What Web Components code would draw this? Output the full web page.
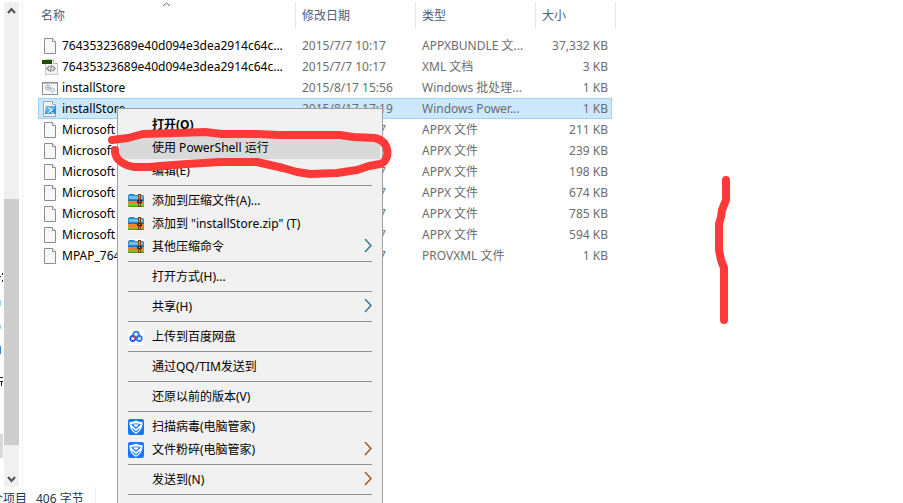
<!DOCTYPE html>
<html lang="zh-CN">
<head>
<meta charset="utf-8">
<meta name="viewport" content="width=device-width, initial-scale=1">
<title>installStore</title>
<style>
  body {
    margin: 0;
    background: #fff;
    font: 12px/20px "Noto Sans", "Noto Sans CJK SC", sans-serif;
    color: #000;
    --text-muted: #6d6d6d;
    --text-header: #4c607a;
    --line: #e5e5e5;
  }
</style>
</head>
<body>
<explorer-window>
  <nav-edge slot="nav"></nav-edge>
  <scroll-bar slot="scroll"></scroll-bar>
  <file-list></file-list>
  <status-bar slot="status">
    <span>个项目</span>
    <span slot="size">406 字节</span>
  </status-bar>
  <context-menu slot="overlay">
    <menu-item strong>打开(O)</menu-item>
    <menu-item active>使用 PowerShell 运行</menu-item>
    <menu-item>编辑(E)</menu-item>
    <menu-line></menu-line>
    <menu-item icon="archive">添加到压缩文件(A)...</menu-item>
    <menu-item icon="archive">添加到 "installStore.zip" (T)</menu-item>
    <menu-item icon="archive" submenu="#2b6a8c">其他压缩命令</menu-item>
    <menu-line></menu-line>
    <menu-item>打开方式(H)...</menu-item>
    <menu-line></menu-line>
    <menu-item submenu="#2b6a8c">共享(H)</menu-item>
    <menu-line></menu-line>
    <menu-item icon="cloud">上传到百度网盘</menu-item>
    <menu-line></menu-line>
    <menu-item>通过QQ/TIM发送到</menu-item>
    <menu-line></menu-line>
    <menu-item>还原以前的版本(V)</menu-item>
    <menu-line></menu-line>
    <menu-item icon="shield">扫描病毒(电脑管家)</menu-item>
    <menu-item icon="shield" submenu="#9a4a10">文件粉碎(电脑管家)</menu-item>
    <menu-line></menu-line>
    <menu-item submenu="#9a4a10">发送到(N)</menu-item>
    <menu-line></menu-line>
  </context-menu>
  <pen-marks slot="overlay"></pen-marks>
</explorer-window>

<script>
const ICONS = {
  file: `
    <path d="M2.500.5h8l3 3v12h-11z" fill="#f8f8f8" stroke="#8c8c8c"/>
    <path d="M10.500.5v3h3" fill="#fff" stroke="#8c8c8c"/>`,
  xml: `
    <path d="M3.500.5h8l4 4v11h-12z" fill="#f4f4f4" stroke="#c8c8c8"/>
    <path d="M11.500.5v4h4" fill="#fff" stroke="#b8b8b8"/>
    <path d="M0 1h10v4H0z" fill="#1f4d00"/>
    <path d="M7.500 7 5 9.500 7.500 12M10.500 7 13 9.500 10.500 12M9.500 6l-1 7" fill="none" stroke="#8f8f8f" stroke-width="1.400"/>`,
  batch: `
    <rect x=".5" y="2.500" width="15" height="12" fill="#f7f8f9" stroke="#8c9094"/>
    <path d="M1 3h14" stroke="#8c9094"/>
    <circle cx="6" cy="7.500" r="2.500" fill="#e4e6e8" stroke="#8d9398" stroke-dasharray="1.500 .6"/>
    <circle cx="6" cy="7.500" r=".8" fill="#7c8288"/>
    <circle cx="10.500" cy="10" r="2" fill="#dcecf4" stroke="#7fa6b9" stroke-dasharray="1.300 .5"/>`,
  script: `
    <path d="M1.500.5h9l3 3v12h-12z" fill="#f2f3f4" stroke="#a4a7aa"/>
    <path d="M10.500.5v3h3" fill="#fff" stroke="#a4a7aa"/>
    <path d="M4 5h10v7l-1 1H3z" fill="#2490cc"/>
    <path d="M4 5h9v3l-9 3z" fill="#5fb6e2"/>
    <path d="m6.500 6.500 3.500 2.800-4.500 2.700M9 12h3" fill="none" stroke="#eaf6fc" stroke-width="1.200"/>`,
  archive: `
    <path d="M0 0h16v15H0z" fill="#fff"/>
    <path d="M0 3 1 1h5l1 1h8l1 1v6H0z" fill="#2589cf"/>
    <path d="M1 3h14v3H1z" fill="#6fbdf0"/>
    <path d="M0 8h16v3H0z" fill="#f5811f"/>
    <path d="M0 7h16v1H0z" fill="#1b6fb3"/>
    <path d="M0 11h16v3H0z" fill="#7cc02e"/>
    <path d="M0 13h16v1H0z" fill="#4f961d"/>
    <path d="M10 1h3v13h-3z" fill="#7a3d19"/>
    <path d="M9 7h5v3H9z" fill="#4d2a18"/>
    <path d="M11 2h1v4h-1zM11 8h1v1h-1zM11 11h1v2h-1z" fill="#d3a366"/>`,
  cloud: `
    <rect width="16" height="16" rx="3" fill="#fff"/>
    <g fill="none" stroke-width="1.800">
      <circle cx="8" cy="5.500" r="2.800" stroke="#2878f5"/>
      <circle cx="4.800" cy="9.500" r="2.500" stroke="#2858e8"/>
      <circle cx="11.200" cy="9.500" r="2.500" stroke="#2878f5"/>
    </g>
    <path d="m6 9 1.800-1.800" stroke="#f04040" stroke-width="2"/>`,
  shield: `
    <rect width="16" height="16" rx="2" fill="#1677ff"/>
    <path d="M8 1.500c2 1 4 1.500 6.500 1.500.2 5-1.500 9-6.500 12C3 12 1.300 8 1.500 3 4 3 6 2.500 8 1.500z" fill="#fff"/>
    <path d="M3 5.500C5 4 11 4 13 5.500L8 10z" fill="#1677ff"/>
    <path d="M5 5.800c2-.8 4-.8 6 0L8 8.300z" fill="#fff"/>
    <path d="M3.800 8.500 8 12.200l4.200-3.700C11.400 11 10 12.300 8 13.600 6 12.300 4.600 11 3.800 8.500z" fill="#1677ff"/>`,
};

class ExplorerWindow extends HTMLElement {
  constructor() {
    super();
    this.attachShadow({ mode: "open" });
    this.shadowRoot.innerHTML = `
      <style>
        :host {
          display: grid;
          position: relative;
          grid-template-columns: 4px 15px 1fr;
          grid-template-rows: 1fr 16px;
          height: 100vh;
          overflow: hidden;
        }
        main {
          margin: 2px 0 0 3px;
          border-left: 1px solid #f0f0f0;
          min-width: 0;
        }
        footer {
          grid-column: 1 / -1;
        }
      </style>
      <slot name="nav"></slot>
      <slot name="scroll"></slot>
      <main><slot></slot></main>
      <footer><slot name="status"></slot></footer>
      <slot name="overlay"></slot>
    `;
  }
}

// the sliver of the folder tree left of its scrollbar
class NavEdge extends HTMLElement {
  constructor() {
    super();
    this.attachShadow({ mode: "open" });
    this.shadowRoot.innerHTML = `
      <style>
        :host { display: block; overflow: hidden; }
        svg { display: block; }
      </style>
      <svg width="4" height="487" aria-hidden="true">
        <path d="M2 273h1v2H2zM2 280h1v2H2zM0 276h1v1H0z" fill="#222"/>
        <path d="M0 300h1v6H0zM0 325h1v4H0z" fill="#8ed8f5"/>
        <path d="M0 346h1v8H0z" fill="#2f83d8"/>
        <path d="M0 377h3v1H0zM0 381h3v1H0zM1 382h1v4H1z" fill="#222"/>
        <path d="M0 434h3v24H0z" fill="#d9d9d9"/>
      </svg>
    `;
  }
}

class ScrollBar extends HTMLElement {
  constructor() {
    super();
    this.attachShadow({ mode: "open" });
    this.shadowRoot.innerHTML = `
      <style>
        :host {
          display: grid;
          grid-template-rows: 17px 180fr 246fr 25fr 17px;
          margin-top: 2px;
          background: #f0f0f0;
        }
        svg { display: block; fill: none; stroke: #505050; stroke-width: 2; }
        .thumb { grid-row: 3; background: #cdcdcd; }
        .down { grid-row: 5; }
      </style>
      <svg width="15" height="17" aria-hidden="true"><path d="m4 11 3.500-4 3.500 4"/></svg>
      <div class="thumb"></div>
      <svg class="down" width="15" height="17" aria-hidden="true"><path d="m4 7 3.500 4L11 7"/></svg>
    `;
  }
}

class FileIcon extends HTMLElement {
  constructor() {
    super();
    this.attachShadow({ mode: "open" });
  }

  connectedCallback() {
    this.shadowRoot.innerHTML = `
      <style>
        :host { display: block; flex: none; width: 16px; height: 16px; }
        svg { display: block; }
      </style>
      <svg width="16" height="16" viewBox="0 0 16 16" aria-hidden="true">${ICONS[this.getAttribute("name")] || ""}</svg>
    `;
  }
}

class FileList extends HTMLElement {
  constructor() {
    super();
    this.attachShadow({ mode: "open" });
    this.files = [
      ["file", "76435323689e40d094e3dea2914c64c...", "2015/7/7 10:17", "APPXBUNDLE 文...", "37,332 KB"],
      ["xml", "76435323689e40d094e3dea2914c64c...", "2015/7/7 10:17", "XML 文档", "3 KB"],
      ["batch", "installStore", "2015/8/17 15:56", "Windows 批处理...", "1 KB"],
      ["script", "installStore", "2015/8/17 17:19", "Windows Power...", "1 KB", true],
      ["file", "Microsoft", "2015/7/7 10:17", "APPX 文件", "211 KB"],
      ["file", "Microsoft", "2015/7/7 10:17", "APPX 文件", "239 KB"],
      ["file", "Microsoft", "2015/7/7 10:17", "APPX 文件", "198 KB"],
      ["file", "Microsoft", "2015/7/7 10:17", "APPX 文件", "674 KB"],
      ["file", "Microsoft", "2015/7/7 10:17", "APPX 文件", "785 KB"],
      ["file", "Microsoft", "2015/7/7 10:17", "APPX 文件", "594 KB"],
      ["file", "MPAP_764", "2015/7/7 10:17", "PROVXML 文件", "1 KB"],
    ];
  }

  connectedCallback() {
    this.render();
  }

  render() {
    this.shadowRoot.innerHTML = `
      <style>
        :host { display: block; padding-left: 15px; }
        table {
          table-layout: fixed;
          width: 578px;
          border-collapse: separate;
          border-spacing: 0;
        }
        .name { width: 258px; }
        .date, .type { width: 120px; }
        .size { width: 76px; }
        .end { width: 4px; }
        th {
          position: relative;
          box-sizing: border-box;
          height: 27px;
          padding: 0 0 0 6px;
          border-right: 1px solid var(--line);
          color: var(--text-header);
          font-weight: 400;
          text-align: left;
        }
        th:first-child { padding-left: 3px; }
        th svg {
          position: absolute;
          top: 0;
          left: 0;
          right: 0;
          margin: 0 auto;
          fill: none;
          stroke: #6a6a6a;
        }
        .gap td { height: 6px; }
        td {
          box-sizing: border-box;
          height: 21px;
          padding: 0 0 0 6px;
          color: var(--text-muted);
          white-space: nowrap;
          overflow: hidden;
          line-height: 19px;
        }
        td:first-child { padding-left: 4px; color: #000; }
        td:nth-child(4) { padding: 0 4px 0 0; text-align: right; }
        .label { display: flex; align-items: center; gap: 4px; }
        .selected td:not(:last-child) {
          background: #cce8ff;
          border: solid #99d1ff;
          border-width: 1px 0;
        }
        .selected td:first-child { box-shadow: inset 1px 0 #99d1ff; }
        .selected td:nth-child(4) { box-shadow: inset -1px 0 #99d1ff; }
      </style>
      <table>
        <colgroup>
          <col class="name"><col class="date"><col class="type"><col class="size"><col class="end">
        </colgroup>
        <thead>
          <tr>
            <th scope="col">名称<svg width="9" height="5" aria-hidden="true"><path d="m1 4 3.500-3L8 4"/></svg></th>
            <th scope="col">修改日期</th>
            <th scope="col">类型</th>
            <th scope="col" colspan="2">大小</th>
          </tr>
        </thead>
        <tbody>
          <tr class="gap"><td colspan="5"></td></tr>
          ${this.files
            .map(
              ([icon, name, date, type, size, selected]) => `
            <tr class="${selected ? "selected" : ""}">
              <td><div class="label"><file-icon name="${icon}"></file-icon>${name}</div></td>
              <td>${date}</td>
              <td>${type}</td>
              <td>${size}</td>
              <td></td>
            </tr>
          `,
            )
            .join("")}
        </tbody>
      </table>
    `;
  }
}

class StatusBar extends HTMLElement {
  constructor() {
    super();
    this.attachShadow({ mode: "open" });
    this.shadowRoot.innerHTML = `
      <style>
        :host { display: flex; color: #1e395b; line-height: 23px; white-space: nowrap; }
        .count { display: flex; justify-content: flex-end; width: 27px; }
        .size { width: 59px; padding-left: 9px; border-right: 1px solid #f0f0f0; }
      </style>
      <div class="count"><slot></slot></div>
      <div class="size"><slot name="size"></slot></div>
    `;
  }
}

class ContextMenu extends HTMLElement {
  constructor() {
    super();
    this.attachShadow({ mode: "open" });
    this.shadowRoot.innerHTML = `
      <style>
        :host {
          display: block;
          position: absolute;
          top: 108px;
          bottom: 0;
          left: 117px;
          width: 260px;
          padding: 4px 2px 0;
          border: 1px solid #a0a0a0;
          border-bottom: 0;
          background: #f1f1f1;
        }
      </style>
      <div role="menu"><slot></slot></div>
    `;
  }
}

class MenuItem extends HTMLElement {
  constructor() {
    super();
    this.attachShadow({ mode: "open" });
  }

  connectedCallback() {
    this.render();
  }

  render() {
    const icon = this.getAttribute("icon");
    const submenu = this.getAttribute("submenu");

    this.shadowRoot.innerHTML = `
      <style>
        :host { display: block; }
        button {
          display: flex;
          align-items: center;
          gap: 8px;
          width: 100%;
          height: 23px;
          padding: 0 8px;
          border: 0;
          background: none;
          color: inherit;
          font: inherit;
          text-align: left;
          white-space: nowrap;
        }
        button:hover, :host([active]) button { background: #d9d9d9; }
        :host([strong]) button { font-weight: 700; }
        .text { flex: 1; }
        .arrow { fill: none; stroke-width: 1.300; }
      </style>
      <button type="button" role="menuitem">
        <file-icon name="${icon || ""}"></file-icon>
        <span class="text"><slot></slot></span>
        ${submenu ? `<svg class="arrow" width="8" height="15" stroke="${submenu}" aria-hidden="true"><path d="m1 0 6 6.500L1 13"/></svg>` : ""}
      </button>
    `;
  }
}

class MenuLine extends HTMLElement {
  constructor() {
    super();
    this.attachShadow({ mode: "open" });
    this.shadowRoot.innerHTML = `
      <style>
        :host { display: block; padding: 3px 8px; }
        hr { margin: 0; border: 0; border-top: 1px solid #919191; }
      </style>
      <hr>
    `;
  }
}

// hand-drawn marks over the window
class PenMarks extends HTMLElement {
  constructor() {
    super();
    this.attachShadow({ mode: "open" });
    this.shadowRoot.innerHTML = `
      <style>
        :host { display: block; position: absolute; inset: 0; pointer-events: none; }
        svg {
          display: block;
          width: 100%;
          height: 100%;
          fill: none;
          stroke: #ff3838;
          stroke-width: 8;
          stroke-linecap: round;
          stroke-linejoin: round;
        }
      </style>
      <svg aria-hidden="true">
        <path d="M112 140 128 138 143 134 177 133 205 132 222 134 257 134 280 135 340 135 353 137 375 138Q383 140 386 146 389 153 386 159 384 163 380 164L369 166 357 170 337 173 310 174 297 172 283 168 270 165 257 162 220 162 187 164 160 166 150 167H134Q127 166 121 162 115 158 115 150"/>
        <path d="M726 180V200L722 210 721 217 719 224V250L721 260 724 268V320"/>
      </svg>
    `;
  }
}

customElements.define("file-icon", FileIcon);
customElements.define("explorer-window", ExplorerWindow);
customElements.define("nav-edge", NavEdge);
customElements.define("scroll-bar", ScrollBar);
customElements.define("file-list", FileList);
customElements.define("status-bar", StatusBar);
customElements.define("context-menu", ContextMenu);
customElements.define("menu-item", MenuItem);
customElements.define("menu-line", MenuLine);
customElements.define("pen-marks", PenMarks);
</script>
</body>
</html>
